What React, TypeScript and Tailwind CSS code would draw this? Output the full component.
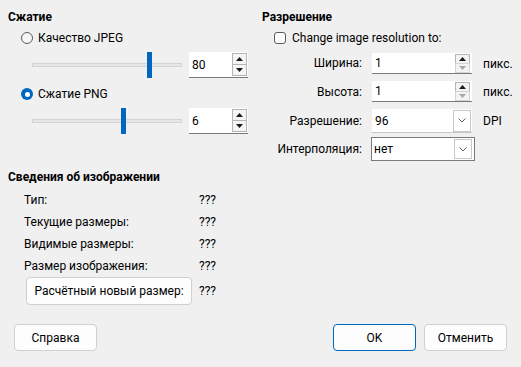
import React from 'react';

const font = { fontFamily: 'Roboto, "Noto Sans", sans-serif' };

const Radio: React.FC<{ checked?: boolean; label: string }> = ({ checked, label }) => (
  <div className="flex h-[18px] items-center pl-[13px]">
    {checked ? (
      <span className="flex h-[12px] w-[12px] items-center justify-center rounded-full bg-[#0067c0]">
        <span className="h-[5px] w-[5px] rounded-full bg-white" />
      </span>
    ) : (
      <span className="h-[12px] w-[12px] rounded-full border border-[#5c5c5c] bg-[#f6f6f6]" />
    )}
    <span className="ml-[5px]">{label}</span>
  </div>
);

const Arrow: React.FC<{ up?: boolean; dim?: boolean }> = ({ up, dim }) => (
  <svg width="7" height="4" viewBox="0 0 7 4" className="block">
    <path d={up ? 'M0 4 L3.5 0 L7 4 Z' : 'M0 0 L3.5 4 L7 0 Z'} fill={dim ? '#a8a8a8' : '#1a1a1a'} />
  </svg>
);

const Slider: React.FC<{ pos: number; value: string }> = ({ pos, value }) => (
  <div className="flex h-[26px] items-center pl-[24px]">
    <div className="relative h-[4px] w-[150px] border border-[#d4d4d4] bg-[#e6e6e6]">
      <div className="absolute top-[-12px] h-[26px] w-[5px] bg-[#0067c0]" style={{ left: pos }} />
    </div>
    <div className="ml-[7px] flex h-[26px] w-[59px] items-center border-b border-[#7a7a7a] bg-white pl-[3px] pr-[1px]">
      <span className="flex-1">{value}</span>
      <div className="flex flex-col">
        <div className="flex h-[12px] w-[15px] items-center justify-center border border-[#b5b5b5] bg-[#f5f5f5]">
          <Arrow up />
        </div>
        <div className="mt-[-1px] flex h-[12px] w-[15px] items-center justify-center border border-[#b5b5b5] bg-[#f5f5f5]">
          <Arrow />
        </div>
      </div>
    </div>
  </div>
);

const SmallSpin: React.FC = () => (
  <div className="flex h-[21px] w-[100px] items-start border-b border-[#7a7a7a] bg-white pl-[3px] pr-[2px]">
    <span className="flex-1 leading-[21px]">1</span>
    <div className="mt-[1px] flex flex-col">
      <div className="flex h-[10px] w-[15px] items-center justify-center border border-[#b5b5b5] bg-[#f3f3f3]">
        <Arrow up />
      </div>
      <div className="mt-[-1px] flex h-[10px] w-[15px] items-center justify-center border border-[#d4d4d4] bg-[#f3f3f3]">
        <Arrow dim />
      </div>
    </div>
  </div>
);

const Chevron = () => (
  <svg width="8" height="5" viewBox="0 0 8 5" className="block">
    <path d="M0.5 0.5 L4 4 L7.5 0.5" fill="none" stroke="#606060" strokeWidth="1" />
  </svg>
);

const Btn: React.FC<{ children: React.ReactNode; primary?: boolean; className?: string }> = ({
  children,
  primary,
  className = '',
}) => (
  <button
    type="button"
    className={`flex h-[27px] items-center justify-center rounded-[4px] border bg-[#fdfdfd] ${
      primary ? 'border-[#0067c0]' : 'border-[#d0d0d0]'
    } ${className}`}
  >
    {children}
  </button>
);

const InfoRow: React.FC<{ label: string }> = ({ label }) => (
  <div className="flex h-[21px] items-center">
    <span className="w-[191px] pl-[16px]">{label}</span>
    <span>???</span>
  </div>
);

export default function App() {
  return (
    <div
      className="flex h-[367px] w-[521px] flex-col overflow-hidden bg-[#f0f0f0] text-[12px] leading-[16px] text-black"
      style={font}
    >
      <div className="flex pl-[8px] pt-[9px]">
        {/* Сжатие */}
        <div className="flex w-[254px] flex-col">
          <div className="h-[16px] font-bold">Сжатие</div>
          <div className="mt-[4px]">
            <Radio label="Качество JPEG" />
          </div>
          <div className="mt-[5px]">
            <Slider pos={114} value="80" />
          </div>
          <div className="mt-[7px]">
            <Radio checked label="Сжатие PNG" />
          </div>
          <div className="mt-[5px]">
            <Slider pos={88} value="6" />
          </div>
        </div>

        {/* Разрешение */}
        <div className="flex flex-1 flex-col">
          <div className="h-[16px] font-bold">Разрешение</div>
          <div className="mt-[4px] flex h-[18px] items-center pl-[12px]">
            <span className="h-[12px] w-[12px] rounded-[3px] border border-[#5c5c5c] bg-[#fbfbfb]" />
            <span className="ml-[6px]">Change image resolution to:</span>
          </div>
          <div className="mt-[6px] grid grid-cols-[100px_101px_auto] items-center gap-x-[10px]">
            <span className="h-[21px] text-right leading-[21px]">Ширина:</span>
            <SmallSpin />
            <span>пикс.</span>

            <span className="mt-[7px] text-right">Высота:</span>
            <div className="mt-[7px]">
              <SmallSpin />
            </div>
            <span className="mt-[7px]">пикс.</span>

            <span className="mt-[7px] text-right">Разрешение:</span>
            <div className="mt-[7px] flex h-[24px] w-[100px] items-center border-b border-[#c8c8c8] bg-white pl-[3px] pr-[1px]">
              <span className="flex-1">96</span>
              <div className="flex h-[22px] w-[18px] items-center justify-center border border-[#c8c8c8] bg-white">
                <Chevron />
              </div>
            </div>
            <span className="mt-[7px]">DPI</span>

            <span className="mt-[4px] text-right">Интерполяция:</span>
            <div className="mt-[4px] ml-[-1px] flex h-[24px] w-[104px] items-center border border-[#7a7a7a] bg-white pl-[2px] pr-[2px]">
              <span className="flex-1">нет</span>
              <div className="flex h-[20px] w-[18px] items-center justify-center border border-[#c8c8c8] bg-white">
                <Chevron />
              </div>
            </div>
            <span />
          </div>
        </div>
      </div>

      {/* Сведения об изображении */}
      <div className="mt-[8px] flex flex-col pl-[8px]">
        <div className="h-[16px] font-bold">Сведения об изображении</div>
        <div className="mt-[4px] flex flex-col gap-[1px]">
          <InfoRow label="Тип:" />
          <InfoRow label="Текущие размеры:" />
          <InfoRow label="Видимые размеры:" />
          <InfoRow label="Размер изображения:" />
        </div>
        <div className="mt-[1px] flex items-center">
          <Btn className="ml-[18px] h-[28px] w-[166px]">Расчётный новый размер:</Btn>
          <span className="ml-[7px]">???</span>
        </div>
      </div>

      <div className="mt-[19px] flex items-center px-[14px]">
        <Btn className="w-[83px]">Справка</Btn>
        <div className="flex-1" />
        <Btn primary className="w-[83px]">
          OK
        </Btn>
        <Btn className="ml-[8px] w-[83px]">Отменить</Btn>
      </div>
    </div>
  );
}
